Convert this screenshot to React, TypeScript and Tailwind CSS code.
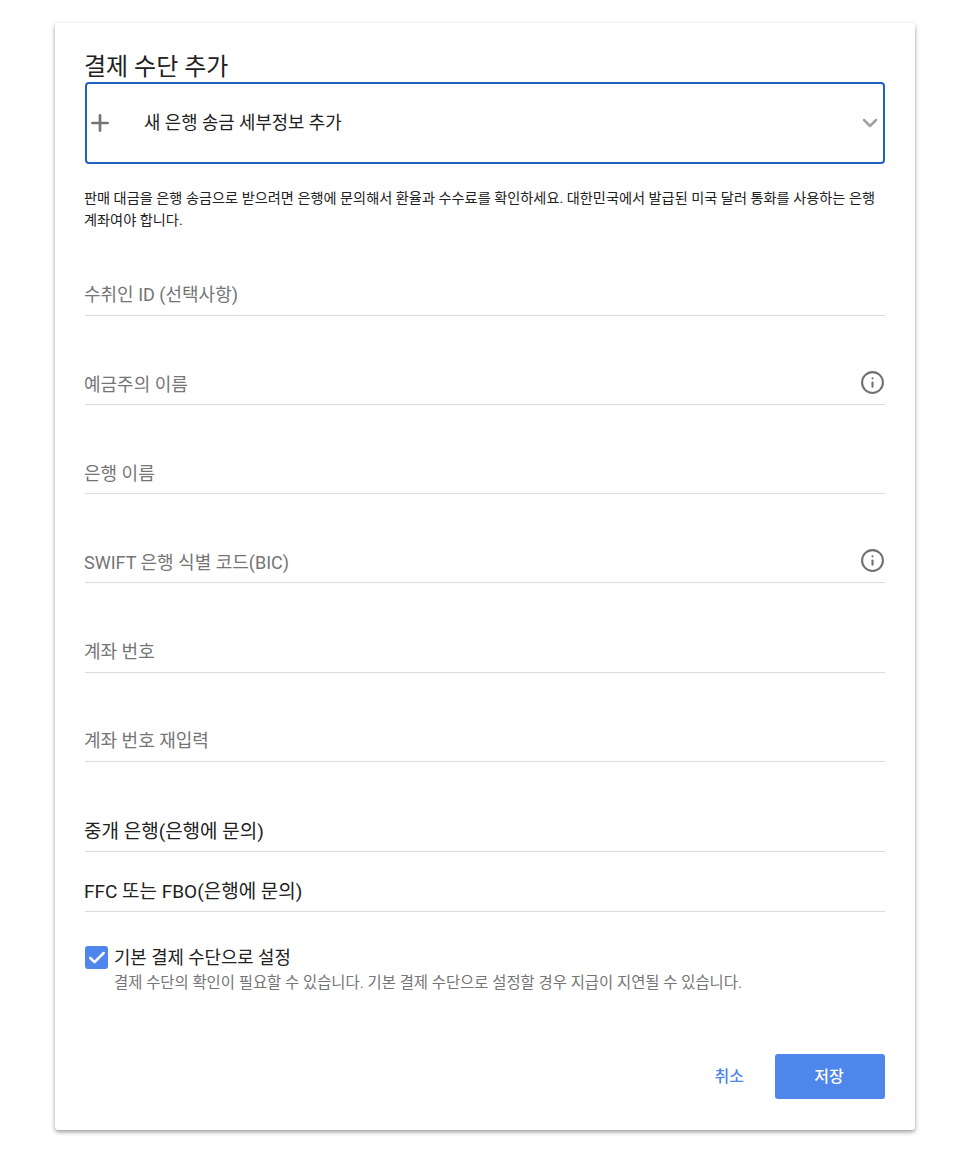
import React from "react";
import { Plus, ChevronDown, Info, Check } from "lucide-react";

const font = "font-['Roboto','Noto_Sans_CJK_KR',sans-serif]";

function Field({ label, info }: { label: string; info?: boolean }) {
  return (
    <div className="flex h-[41px] mt-[48.2px] items-center justify-between border-b border-[#dcdcdc]">
      <span className="-ml-[1px] text-[18px] text-[#757575]">{label}</span>
      {info && <Info size={25} strokeWidth={2} className="text-[#707070] mb-[4px]" />}
    </div>
  );
}

function FilledField({ label, className }: { label: string; className: string }) {
  return (
    <div className={`flex items-center border-b border-[#dcdcdc] pt-[3px] text-[19px] text-[#212121] ${className}`}>
      <span className="-ml-[1px]">{label}</span>
    </div>
  );
}

export default function App() {
  return (
    <div className={`min-h-[1168px] bg-white pt-[23px] px-[55px] ${font}`}>
      <div className="h-[1107px] w-[860px] rounded-[3px] bg-white px-[30px] pt-[30px] shadow-[0_2px_4px_rgba(0,0,0,0.4)]">
        <h1 className="-ml-[1px] text-[24px] leading-[29px] font-normal text-[#212121]">결제 수단 추가</h1>

        <div className="flex h-[82px] items-center rounded-[4px] border-2 border-[#2260c4]">
          <Plus size={26} strokeWidth={2.5} className="text-[#757575]" />
          <span className="ml-[31px] flex-1 text-[17.8px] text-[#212121]">새 은행 송금 세부정보 추가</span>
          <ChevronDown size={24} strokeWidth={2.5} className="mr-[1px] text-[#a0a0a0]" />
        </div>

        <p className="-ml-[1px] mt-[23px] text-[14.2px] leading-[22px] text-[#212121]">
          판매 대금을 은행 송금으로 받으려면 은행에 문의해서 환율과 수수료를 확인하세요. 대한민국에서 발급된 미국 달러 통화를 사용하는 은행 계좌여야 합니다.
        </p>

        <div className="mt-[-4.3px]">
          <Field label="수취인 ID (선택사항)" />
          <Field label="예금주의 이름" info />
          <Field label="은행 이름" />
          <Field label="SWIFT 은행 식별 코드(BIC)" info />
          <Field label="계좌 번호" />
          <Field label="계좌 번호 재입력" />
        </div>

        <FilledField label="중개 은행(은행에 문의)" className="mt-[48.3px] h-[42px]" />
        <FilledField label="FFC 또는 FBO(은행에 문의)" className="mt-[18px] h-[42px]" />

        <div className="mt-[33px] flex">
          <div className="mt-[1px] flex h-[23px] w-[23px] items-center justify-center rounded-[3px] bg-[#4f86ec]">
            <Check size={20} strokeWidth={3} className="text-white" />
          </div>
          <div className="ml-[6px]">
            <div className="text-[17.8px] leading-[26px] text-[#212121]">기본 결제 수단으로 설정</div>
            <div className="mt-[2px] text-[15.4px] leading-[20px] text-[#757575]">
              결제 수단의 확인이 필요할 수 있습니다. 기본 결제 수단으로 설정할 경우 지급이 지연될 수 있습니다.
            </div>
          </div>
        </div>

        <div className="mt-[61px] flex items-center justify-end">
          <button className="mr-[31px] text-[16px] font-medium text-[#4f86ec]">취소</button>
          <button className="h-[45px] w-[110px] rounded-[3px] bg-[#4f86ec] pr-[2px] text-[16px] font-medium text-white">저장</button>
        </div>
      </div>
    </div>
  );
}
